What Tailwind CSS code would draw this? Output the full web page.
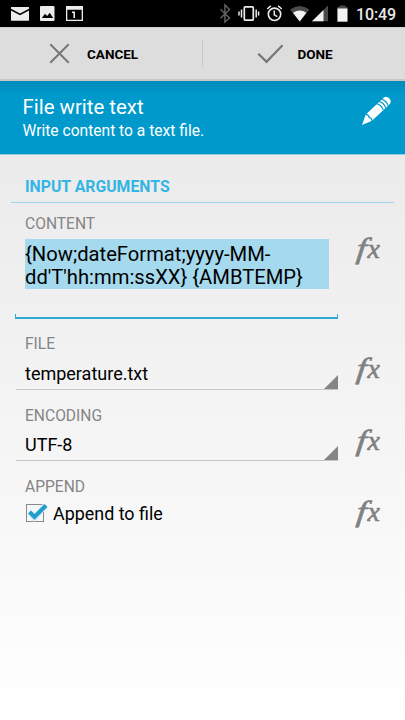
<!DOCTYPE html>
<html lang="en">
<head>
<meta charset="utf-8">
<title>File write text</title>
<script src="https://cdn.jsdelivr.net/npm/@tailwindcss/browser@4"></script>
</head>
<body class="w-[405px] h-[720px] overflow-hidden flex flex-col bg-white font-[Roboto,sans-serif] text-black">
  <!-- Status bar -->
  <header class="h-[27px] shrink-0 bg-black">
    <svg class="block" width="405" height="27" viewBox="0 0 405 27">
      <path d="M11 7h18v1.800l-9 4.700-9-4.700z M11 10.600l9 4.700 9-4.700v10.100H11z" fill="#ececec"/>
      <rect x="40" y="6" width="14.500" height="15" rx="1" fill="#ececec"/>
      <path d="M41.800 18l3.200-4.300 2.200 2.400 2.600-3.300 3.400 5.200z" fill="#000"/>
      <path d="M66 6h17v15H66z M67.300 9.800v9.900h14.400V9.800z" fill="#ececec" fill-rule="evenodd"/>
      <path d="M72 11.500h3v6.500h-1.600v-5.100H72z" fill="#ececec"/>
      <path d="M220.500 9.200l9 8.800-4.600 4V5l4.600 4.500-9 8.700" fill="none" stroke="#636363" stroke-width="1.400"/>
      <rect x="244.300" y="6.800" width="9" height="13.400" rx="1" fill="none" stroke="#ececec" stroke-width="1.700"/>
      <path d="M241.500 9.500v8 M239 11.500v4 M256.200 9.500v8 M258.600 11.500v4" stroke="#ececec" stroke-width="1.500"/>
      <circle cx="274.500" cy="14.300" r="6.200" fill="none" stroke="#ececec" stroke-width="1.600"/>
      <path d="M274.300 10.500v4.300l3 1.900 M267.200 9l3.600-3.100 M278.200 5.900l3.600 3.100" fill="none" stroke="#ececec" stroke-width="1.500"/>
      <path d="M290 9.500q9.700-7.200 19.400 0L299.700 21.500z" fill="#4a4a4a"/>
      <path d="M293 12.700q6.700-4.500 13.400 0L299.700 21.500z" fill="#f2f2f2"/>
      <path d="M328 5.500v15.700h-16z" fill="#4a4a4a"/>
      <path d="M323.500 10v11.200H312z" fill="#f2f2f2"/>
      <path d="M339.500 5.500h6v1.400h2v2.600h-10.100V6.900h2.100z" fill="#4a4a4a"/>
      <path d="M337.400 8.500h10.100v13.200h-10.100z" fill="#f2f2f2"/>
      <text x="356" y="19.500" font-size="16" font-weight="500" textLength="40" fill="#e8e8e8">10:49</text>
    </svg>
  </header>

  <!-- Cancel / Done -->
  <nav class="h-[54px] shrink-0 flex bg-[#ddd] border-t border-[#cfcfcf] border-b-2 border-b-[#c8c8c8] text-[13.500px] font-bold leading-[52px]">
    <div class="w-[202px] flex items-center pl-[49px]">
      <svg class="mr-[17px] shrink-0" width="21" height="21" viewBox="0 0 21 21"><path d="M1.300 1.300l18.400 18.400M19.700 1.300L1.300 19.700" stroke="#777" stroke-width="2"/></svg>
      <span>CANCEL</span>
    </div>
    <div class="w-px h-[27px] mt-[12px] bg-[#c9c9c9]"></div>
    <div class="flex items-center pl-[54px]">
      <svg class="mr-[13.500px] shrink-0" width="27" height="20" viewBox="0 0 27 20"><path d="M1.300 9.800l8.200 8L25.500 1.300" fill="none" stroke="#777" stroke-width="2.300"/></svg>
      <span>DONE</span>
    </div>
  </nav>

  <!-- Title -->
  <section class="h-[74px] shrink-0 flex justify-between bg-linear-to-b from-[#008bba] from-0% to-[#0099cc] to-20% border-b border-[#8fcde3] pl-[22.500px] text-white">
    <div>
      <h1 class="mt-[14px] text-[20.400px] leading-[24px]">File write text</h1>
      <p class="mt-[3px] text-[15.600px] leading-[18px]">Write content to a text file.</p>
    </div>
    <svg class="mt-[14px] mr-[13px]" width="32" height="32" viewBox="0 0 32 32">
      <path d="M2 30l3.800-10.500L21 5.200l3.200-3q2.600-1.400 5 1t1 5.200l-3 3.200L12 25.800z" fill="#fff"/>
      <path d="M5.800 19.200q3.200.8 3.300 3.300 2.400.3 3 3.300M16.600 8.600q4.800 1.200 6.600 6.200M19 6.400q4.800 1.200 6.600 6.200M21.400 4.200q4.800 1.200 6.600 6.200" fill="none" stroke="#0099cc" stroke-width="1.200"/>
    </svg>
  </section>

  <!-- Arguments -->
  <main class="grow bg-linear-to-b from-[#ebebeb] to-white">
    <h2 class="mx-[11px] h-[48px] pt-[22px] pl-[14px] border-b border-[#9fd3e9] text-[15.800px] font-bold leading-[19px] text-[#33b5e5]">INPUT ARGUMENTS</h2>

    <div class="flex h-[116px]">
      <div class="w-[323px] ml-[15px] pt-[12px]">
        <h3 class="pl-[10px] text-[15.600px] leading-[18px] text-[#858585]">CONTENT</h3>
        <div class="h-[80px] mt-[6px] flex flex-col">
          <p class="w-[304px] h-[50px] ml-[10px] pt-[3.500px] bg-[#a5d9ed] text-[20.200px] leading-[23.500px] whitespace-nowrap">{Now;dateFormat;yyyy-MM-<br>dd'T'hh:mm:ssXX} {AMBTEMP}</p>
          <div class="mt-auto h-[5px] border-2 border-t-0 border-x-1 border-[#2fa8d4]"></div>
        </div>
      </div>
      <svg class="ml-[10px] mt-[26px]" width="44" height="44" viewBox="0 0 44 44"><g font-family="Liberation Serif, serif" font-style="italic" fill="#808080" stroke="#808080" stroke-width=".6"><text transform="translate(7.800 28.800) skewX(-6) scale(1.240 1)" font-size="29">f</text><text x="19.500" y="28.500" font-size="28">x</text></g></svg>
    </div>

    <div class="flex h-[71px]">
      <div class="w-[322px] ml-[16px] pt-[16px]">
        <h3 class="pl-[9px] text-[15.600px] leading-[18px] text-[#858585]">FILE</h3>
        <div class="h-[37px] flex justify-between border-b border-[#c5c5c5]">
          <p class="pl-[9px] pt-[10px] text-[18px] leading-[22px]">temperature.txt</p>
          <svg class="mt-auto" width="14" height="14"><path d="M14 0v14H0z" fill="#858585"/></svg>
        </div>
      </div>
      <svg class="ml-[10px] mt-[30px]" width="44" height="44" viewBox="0 0 44 44"><g font-family="Liberation Serif, serif" font-style="italic" fill="#808080" stroke="#808080" stroke-width=".6"><text transform="translate(7.800 28.800) skewX(-6) scale(1.240 1)" font-size="29">f</text><text x="19.500" y="28.500" font-size="28">x</text></g></svg>
    </div>

    <div class="flex h-[71px]">
      <div class="w-[322px] ml-[16px] pt-[17px]">
        <h3 class="pl-[9px] text-[15.600px] leading-[18px] text-[#858585]">ENCODING</h3>
        <div class="h-[36px] flex justify-between border-b border-[#c5c5c5]">
          <p class="pl-[9px] pt-[9px] text-[18px] leading-[22px]">UTF-8</p>
          <svg class="mt-auto" width="14" height="14"><path d="M14 0v14H0z" fill="#858585"/></svg>
        </div>
      </div>
      <svg class="ml-[10px] mt-[31px]" width="44" height="44" viewBox="0 0 44 44"><g font-family="Liberation Serif, serif" font-style="italic" fill="#808080" stroke="#808080" stroke-width=".6"><text transform="translate(7.800 28.800) skewX(-6) scale(1.240 1)" font-size="29">f</text><text x="19.500" y="28.500" font-size="28">x</text></g></svg>
    </div>

    <div class="flex h-[75px]">
      <div class="w-[322px] ml-[16px] pt-[17px]">
        <h3 class="pl-[9px] text-[15.600px] leading-[18px] text-[#858585]">APPEND</h3>
        <label class="flex items-center h-[36px] pl-[9px] text-[17.900px] leading-[22px]">
          <svg class="mr-[4px]" width="24" height="24" viewBox="0 0 24 24">
            <rect x="1.500" y="2.500" width="17" height="17" fill="#f4f8fa" stroke="#8a8a8a"/>
            <path d="M4.500 10l5 5.500L20.500 3.500" fill="none" stroke="#d3ebf4" stroke-width="6"/>
            <path d="M4.500 10l5 5L21 3.500" fill="none" stroke="#219dcb" stroke-width="4"/>
          </svg>
          <span>Append to file</span>
        </label>
      </div>
      <svg class="ml-[10px] mt-[31px]" width="44" height="44" viewBox="0 0 44 44"><g font-family="Liberation Serif, serif" font-style="italic" fill="#808080" stroke="#808080" stroke-width=".6"><text transform="translate(7.800 28.800) skewX(-6) scale(1.240 1)" font-size="29">f</text><text x="19.500" y="28.500" font-size="28">x</text></g></svg>
    </div>
  </main>
</body>
</html>
